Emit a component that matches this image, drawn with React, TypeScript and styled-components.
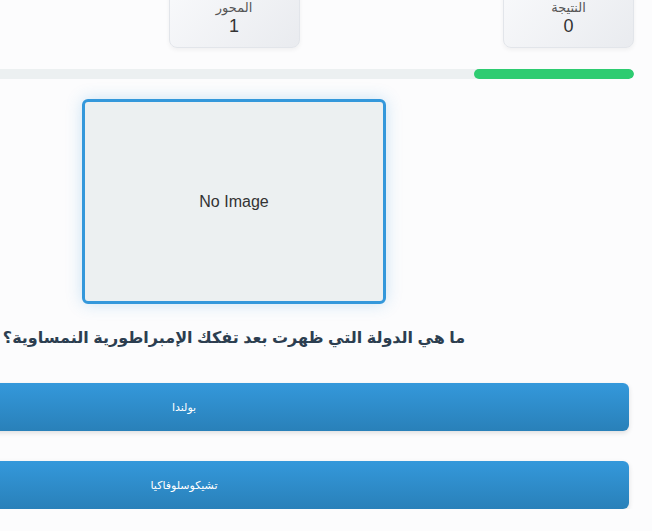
import React from "react";
import styled, { createGlobalStyle } from "styled-components";

const GlobalStyle = createGlobalStyle`
  html, body {
    margin: 0;
    padding: 0;
    overflow: hidden;
    background: #fcfcfd;
  }
  body {
    direction: rtl;
    font-family: "Liberation Sans", "DejaVu Sans", sans-serif;
    color: #333;
  }
`;

const Page = styled.div`
  width: 800px;
  margin-right: 18px;
  margin-top: -11px;
  display: flex;
  flex-direction: column;
`;

const StatsBar = styled.div`
  display: grid;
  grid-template-columns: repeat(3, 131px);
  justify-content: space-between;
`;

const StatCard = styled.div`
  box-sizing: border-box;
  padding: 10px 10px;
  border: 1px solid #e2e5ea;
  border-radius: 8px;
  background: linear-gradient(135deg, #f8f9fb 0%, #e9ebef 100%);
  box-shadow: 0 2px 4px rgba(0, 0, 0, 0.05);
  display: flex;
  flex-direction: column;
  align-items: center;
`;

const StatLabel = styled.span`
  font-size: 13px;
  line-height: 16px;
  color: #555;
`;

const StatValue = styled.span`
  font-size: 18px;
  line-height: 21px;
  color: #333;
`;

const ProgressTrack = styled.div`
  margin-top: 21px;
  height: 10px;
  background: #ecf0f1;
  border-radius: 5px;
  overflow: hidden;
`;

const ProgressFill = styled.div`
  height: 100%;
  background: #2ecc71;
  border-radius: 5px;
`;

const ImageFrame = styled.div`
  align-self: center;
  margin-top: 20px;
  width: 304px;
  height: 205px;
  box-sizing: border-box;
  border: 3px solid #3498db;
  border-radius: 6px;
  background: #ecf0f1;
  box-shadow: 0 0 16px rgba(52, 152, 219, 0.25);
  display: flex;
  align-items: center;
  justify-content: center;
  font-size: 16px;
  color: #333;
  direction: ltr;
`;

const Question = styled.h2`
  margin: 23px 0 0;
  font-size: 16px;
  line-height: 22px;
  font-weight: bold;
  text-align: center;
  color: #2c3e50;
`;

const Options = styled.div`
  margin-top: 34px;
  margin-right: 5px;
  display: flex;
  flex-direction: column;
  gap: 30px;
`;

const OptionButton = styled.button`
  width: 890px;
  height: 48px;
  flex-shrink: 0;
  border: none;
  border-radius: 6px;
  background: linear-gradient(180deg, #3498db 0%, #2980b9 100%);
  box-shadow: 0 2px 5px rgba(0, 0, 0, 0.12);
  color: #fff;
  font-family: "Liberation Sans", "DejaVu Sans", sans-serif;
  font-size: 11px;
  text-align: center;
  cursor: pointer;
`;

const stats = [
  { label: "النتيجة", value: "0" },
  { label: "المحور", value: "1" },
];

const options = ["بولندا", "تشيكوسلوفاكيا"];

export default function App() {
  const progress = 20;
  return (
    <>
      <GlobalStyle />
      <Page>
        <StatsBar>
          {stats.map((s) => (
            <StatCard key={s.label}>
              <StatLabel>{s.label}</StatLabel>
              <StatValue>{s.value}</StatValue>
            </StatCard>
          ))}
        </StatsBar>
        <ProgressTrack>
          <ProgressFill style={{ width: `${progress}%` }} />
        </ProgressTrack>
        <ImageFrame>No Image</ImageFrame>
        <Question>ما هي الدولة التي ظهرت بعد تفكك الإمبراطورية النمساوية؟</Question>
        <Options>
          {options.map((o) => (
            <OptionButton key={o}>{o}</OptionButton>
          ))}
        </Options>
      </Page>
    </>
  );
}
